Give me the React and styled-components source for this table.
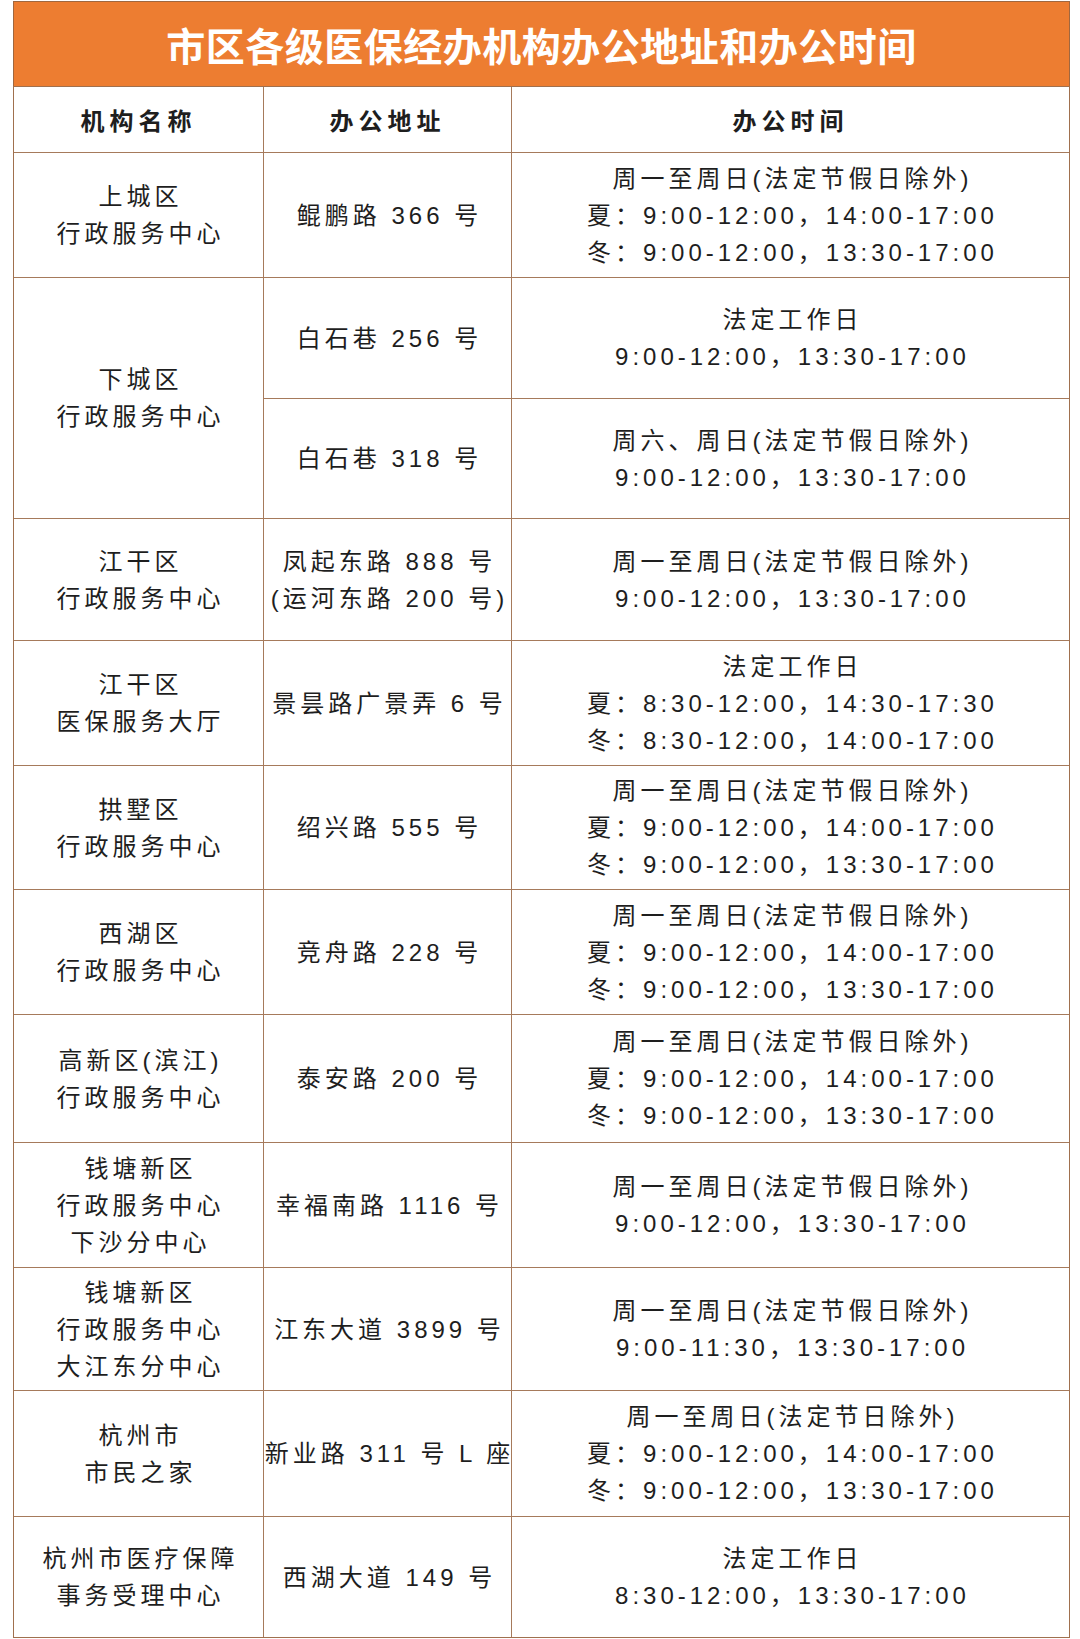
import React from 'react';
import styled, { createGlobalStyle } from 'styled-components';

const Global = createGlobalStyle`
    html, body {
        margin: 0;
        padding: 0;
        background: #fff;
    }
    body {
        font-family: 'Liberation Sans', 'Noto Sans CJK SC', sans-serif;
        color: #1e1e1e;
    }
`;

const Page = styled.div`
    width: 1057px;
    padding: 1px 10px 1px 13px;
`;

const Title = styled.h1`
    margin: 0;
    height: 84px;
    display: flex;
    align-items: center;
    justify-content: center;
    background-color: #ED7D31;
    border: 1px solid #A0673F;
    border-bottom: none;
    color: #fff;
    font-family: 'Noto Sans CJK SC', sans-serif;
    font-size: 39px;
    font-weight: 700;
    letter-spacing: 0.5px;
`;

const Grid = styled.div`
    display: grid;
    grid-template-columns: 249px 247px 1fr;
    grid-template-rows: ${p => p.$rows};
    gap: 1px;
    background-color: #A67A5B;
    border: 1px solid #A0704E;
`;

const Cell = styled.div`
    grid-column: ${p => p.$col};
    grid-row: ${p => (p.$span > 1 ? `span ${p.$span}` : 'auto')};
    background: #fff;
    display: flex;
    flex-direction: column;
    align-items: center;
    justify-content: center;
    text-align: center;
    font-size: 24px;
    line-height: 37px;
    letter-spacing: 4px;
    font-weight: 400;
    white-space: nowrap;
`;

const HeadCell = styled(Cell)`
    font-family: 'Noto Sans CJK SC', sans-serif;
    font-weight: 700;
    letter-spacing: 5px;
`;

const Line = styled.span`
    display: block;
    margin-right: -4px;
`;

const offices = [
    {
        name: ['上城区', '行政服务中心'],
        subs: [
            { addr: ['鲲鹏路 366 号'], h: 124, time: ['周一至周日(法定节假日除外)', '夏：9:00-12:00，14:00-17:00', '冬：9:00-12:00，13:30-17:00'] },
        ],
    },
    {
        name: ['下城区', '行政服务中心'],
        subs: [
            { addr: ['白石巷 256 号'], h: 120, time: ['法定工作日', '9:00-12:00，13:30-17:00'] },
            { addr: ['白石巷 318 号'], h: 119, time: ['周六、周日(法定节假日除外)', '9:00-12:00，13:30-17:00'] },
        ],
    },
    {
        name: ['江干区', '行政服务中心'],
        subs: [
            { addr: ['凤起东路 888 号', '(运河东路 200 号)'], h: 121, time: ['周一至周日(法定节假日除外)', '9:00-12:00，13:30-17:00'] },
        ],
    },
    {
        name: ['江干区', '医保服务大厅'],
        subs: [
            { addr: ['景昙路广景弄 6 号'], h: 124, time: ['法定工作日', '夏：8:30-12:00，14:30-17:30', '冬：8:30-12:00，14:00-17:00'] },
        ],
    },
    {
        name: ['拱墅区', '行政服务中心'],
        subs: [
            { addr: ['绍兴路 555 号'], h: 123, time: ['周一至周日(法定节假日除外)', '夏：9:00-12:00，14:00-17:00', '冬：9:00-12:00，13:30-17:00'] },
        ],
    },
    {
        name: ['西湖区', '行政服务中心'],
        subs: [
            { addr: ['竞舟路 228 号'], h: 124, time: ['周一至周日(法定节假日除外)', '夏：9:00-12:00，14:00-17:00', '冬：9:00-12:00，13:30-17:00'] },
        ],
    },
    {
        name: ['高新区(滨江)', '行政服务中心'],
        subs: [
            { addr: ['泰安路 200 号'], h: 127, time: ['周一至周日(法定节假日除外)', '夏：9:00-12:00，14:00-17:00', '冬：9:00-12:00，13:30-17:00'] },
        ],
    },
    {
        name: ['钱塘新区', '行政服务中心', '下沙分中心'],
        subs: [
            { addr: ['幸福南路 1116 号'], h: 124, time: ['周一至周日(法定节假日除外)', '9:00-12:00，13:30-17:00'] },
        ],
    },
    {
        name: ['钱塘新区', '行政服务中心', '大江东分中心'],
        subs: [
            { addr: ['江东大道 3899 号'], h: 122, time: ['周一至周日(法定节假日除外)', '9:00-11:30，13:30-17:00'] },
        ],
    },
    {
        name: ['杭州市', '市民之家'],
        subs: [
            { addr: ['新业路 311 号 L 座'], h: 125, time: ['周一至周日(法定节日除外)', '夏：9:00-12:00，14:00-17:00', '冬：9:00-12:00，13:30-17:00'] },
        ],
    },
    {
        name: ['杭州市医疗保障', '事务受理中心'],
        subs: [
            { addr: ['西湖大道 149 号'], h: 120, time: ['法定工作日', '8:30-12:00，13:30-17:00'] },
        ],
    },
];

const Lines = ({ items }) => items.map(t => <Line key={t}>{t}</Line>);

const App = () => {
    const rows = ['65px', ...offices.flatMap(o => o.subs.map(s => `${s.h}px`))].join(' ');

    return (
        <>
            <Global />
            <Page>
                <Title>市区各级医保经办机构办公地址和办公时间</Title>
                <Grid $rows={rows}>
                    <HeadCell $col={1}>机构名称</HeadCell>
                    <HeadCell $col={2}>办公地址</HeadCell>
                    <HeadCell $col={3}>办公时间</HeadCell>

                    {offices.map((o, i) => (
                        <React.Fragment key={i}>
                            <Cell $col={1} $span={o.subs.length}>
                                <Lines items={o.name} />
                            </Cell>
                            {o.subs.map((s, j) => (
                                <React.Fragment key={j}>
                                    <Cell $col={2}><Lines items={s.addr} /></Cell>
                                    <Cell $col={3}><Lines items={s.time} /></Cell>
                                </React.Fragment>
                            ))}
                        </React.Fragment>
                    ))}
                </Grid>
            </Page>
        </>
    );
};

export default App;
